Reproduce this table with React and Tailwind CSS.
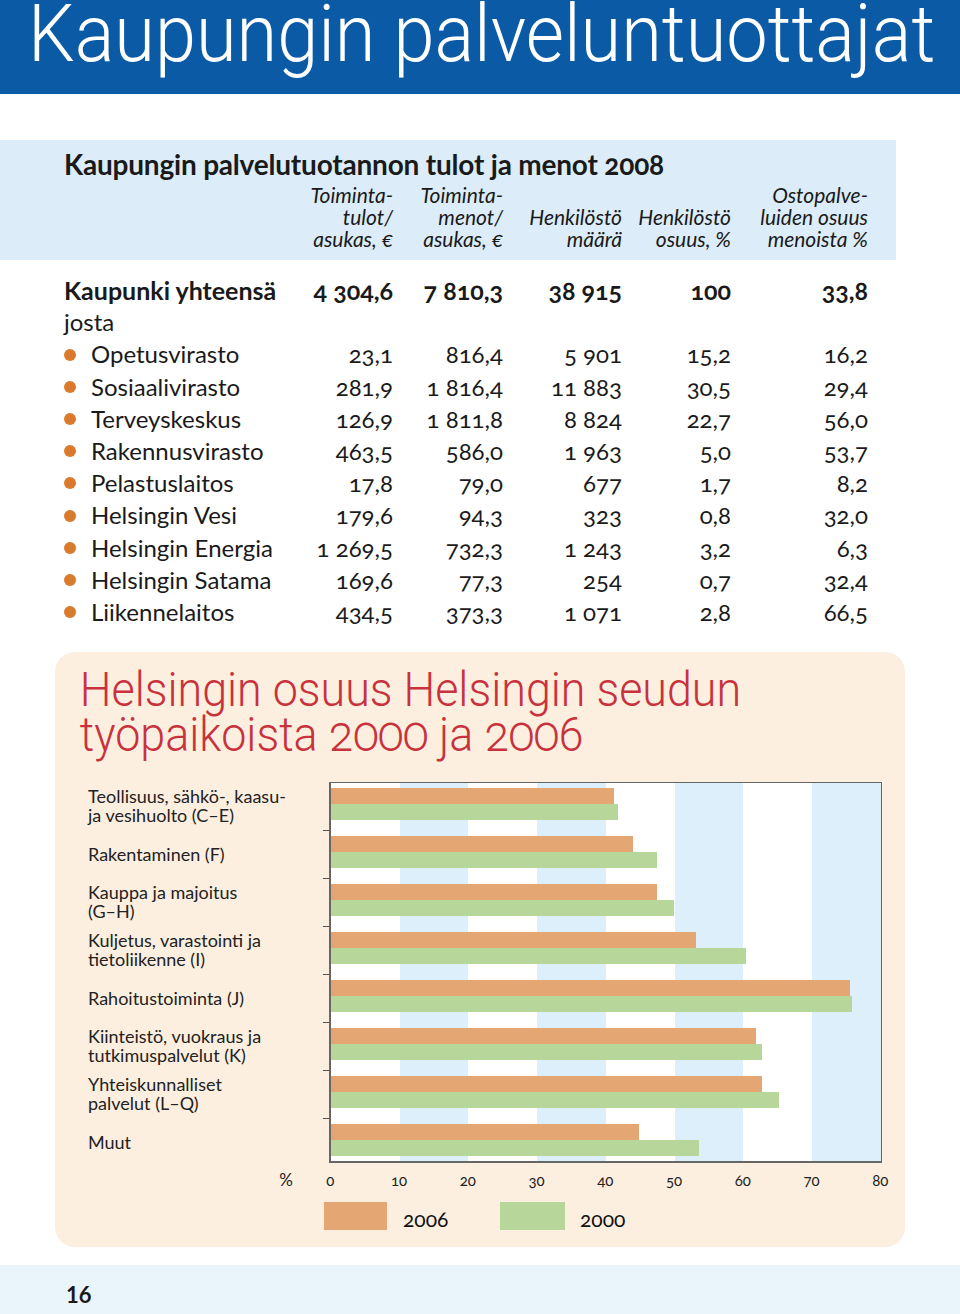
import React from "react";

const rows = [
  ["Opetusvirasto", "23,1", "816,4", "5 901", "15,2", "16,2"],
  ["Sosiaalivirasto", "281,9", "1 816,4", "11 883", "30,5", "29,4"],
  ["Terveyskeskus", "126,9", "1 811,8", "8 824", "22,7", "56,0"],
  ["Rakennusvirasto", "463,5", "586,0", "1 963", "5,0", "53,7"],
  ["Pelastuslaitos", "17,8", "79,0", "677", "1,7", "8,2"],
  ["Helsingin Vesi", "179,6", "94,3", "323", "0,8", "32,0"],
  ["Helsingin Energia", "1 269,5", "732,3", "1 243", "3,2", "6,3"],
  ["Helsingin Satama", "169,6", "77,3", "254", "0,7", "32,4"],
  ["Liikennelaitos", "434,5", "373,3", "1 071", "2,8", "66,5"],
];

// [label lines, 2006, 2000]
const groups = [
  [["Teollisuus, sähkö-, kaasu-", "ja vesihuolto (C–E)"], 41.2, 41.7],
  [["Rakentaminen (F)"], 43.9, 47.4],
  [["Kauppa ja majoitus", "(G–H)"], 47.4, 49.9],
  [["Kuljetus, varastointi ja", "tietoliikenne (I)"], 53.1, 60.4],
  [["Rahoitustoiminta (J)"], 75.5, 75.8],
  [["Kiinteistö, vuokraus ja", "tutkimuspalvelut (K)"], 61.8, 62.7],
  [["Yhteiskunnalliset", "palvelut (L–Q)"], 62.7, 65.2],
  [["Muut"], 44.8, 53.5],
];

const ticks = ["0", "10", "20", "30", "40", "50", "60", "70", "80"];

const PX_PER_UNIT = 550 / 80;

const App = () => {
  return (
    <div className="w-[960px] h-[1314px] bg-white font-['Lato','Open_Sans',sans-serif] oldstyle-nums text-[#1a1a1a] overflow-hidden">
      {/* top banner */}
      <div className="h-[94px] bg-[#0b5aa6] pl-[28px] overflow-hidden">
        <h1 className="font-['Roboto','Liberation_Sans',sans-serif] font-light text-[80px] leading-[68px] text-white scale-x-[0.924] origin-left whitespace-nowrap">
          Kaupungin palveluntuottajat
        </h1>
      </div>

      {/* table header band */}
      <div className="mt-[46px] w-[896px] h-[120px] bg-[#dcedf9] pl-[64px] pt-[8px]">
        <h2 className="text-[28px] leading-[32px] font-bold tracking-[-0.2px]">
          Kaupungin palvelutuotannon tulot ja menot 2008
        </h2>
        <div className="grid grid-cols-[240px_89px_110px_119px_109px_137px] mt-[4px] text-[21px] leading-[22px] italic text-right">
          <div />
          <div className="whitespace-nowrap">Toiminta-<br />tulot/<br />asukas, €</div>
          <div className="whitespace-nowrap">Toiminta-<br />menot/<br />asukas, €</div>
          <div className="whitespace-nowrap"><br />Henkilöstö<br />määrä</div>
          <div className="whitespace-nowrap"><br />Henkilöstö<br />osuus, %</div>
          <div className="whitespace-nowrap">Ostopalve-<br />luiden osuus<br />menoista %</div>
        </div>
      </div>

      {/* table body */}
      <div className="pl-[64px] mt-[14px] text-[24px] leading-[32.2px]">
        <div className="grid grid-cols-[240px_89px_110px_119px_109px_137px] font-bold text-[25px]">
          <div className="whitespace-nowrap">Kaupunki yhteensä</div>
          <div className="text-right whitespace-nowrap">4 304,6</div>
          <div className="text-right whitespace-nowrap">7 810,3</div>
          <div className="text-right">38 915</div>
          <div className="text-right">100</div>
          <div className="text-right">33,8</div>
        </div>
        <div>josta</div>
        {rows.map((r) => (
          <div key={r[0]} className="grid grid-cols-[240px_89px_110px_119px_109px_137px]">
            <div className="flex items-center whitespace-nowrap">
              <span className="w-[12px] h-[12px] shrink-0 rounded-full bg-[#d97a2c] mr-[15px]" />
              {r[0]}
            </div>
            {r.slice(1).map((v, i) => (
              <div key={i} className="text-right whitespace-nowrap">{v}</div>
            ))}
          </div>
        ))}
      </div>

      {/* chart panel */}
      <div className="mt-[24px] ml-[55px] w-[850px] h-[595px] rounded-[20px] bg-[#fcefe0] pt-[15px]">
        <h3 className="pl-[27px] font-['Roboto','Liberation_Sans',sans-serif] font-light text-[49px] leading-[45px] text-[#c8323d] scale-x-[0.915] origin-left whitespace-nowrap">
          Helsingin osuus Helsingin seudun
          <br />
          työpaikoista 2000 ja 2006
        </h3>

        <div className="pl-[33px] mt-[25px]">
          <div className="flex">
            <div className="w-[241px] shrink-0 text-[18px] leading-[19px] text-[#222]">
              {groups.map((g, i) => (
                <div key={i} className="h-[48px] flex flex-col justify-center">
                  {g[0].map((l) => (
                    <div key={l} className="whitespace-nowrap">{l}</div>
                  ))}
                </div>
              ))}
            </div>
            <div className="w-[553px] h-[381px] shrink-0 border-l-2 border-b-2 border-t border-r border-[#666] bg-[repeating-linear-gradient(90deg,#ffffff_0px,#ffffff_68.75px,#ddeffa_68.75px,#ddeffa_137.5px)]">
              {groups.map((g, i) => (
                <div key={i} className="relative h-[48px] pt-[5px] last:h-[45px]">
                  <div className="h-[16px] bg-[#e4a774]" style={{ width: g[1] * PX_PER_UNIT }} />
                  <div className="h-[16px] bg-[#b6d69a]" style={{ width: g[2] * PX_PER_UNIT }} />
                  {i < groups.length - 1 && (
                    <span className="absolute left-[-8px] bottom-0 w-[6px] h-px bg-[#555]" />
                  )}
                </div>
              ))}
            </div>
          </div>

          <div className="flex mt-[5px] text-[15px] leading-[18px] text-[#222]">
            <div className="w-[241px] shrink-0 pr-[36px] text-right text-[17px]">%</div>
            <div className="flex shrink-0 -ml-[33px]">
              {ticks.map((t) => (
                <div key={t} className="w-[68.75px] shrink-0 text-center">{t}</div>
              ))}
            </div>
          </div>

          <div className="flex items-center mt-[9px] ml-[236px] text-[21px] text-[#111]">
            <span className="w-[63px] h-[28px] shrink-0 bg-[#e4a774]" />
            <span className="ml-[16px] w-[97px] pt-[5px]">2006</span>
            <span className="w-[65px] h-[28px] shrink-0 bg-[#b6d69a]" />
            <span className="ml-[15px] pt-[5px]">2000</span>
          </div>
        </div>
      </div>

      {/* page footer */}
      <div className="mt-[18px] h-[49px] bg-[#eaf4fb] pl-[66px] pt-[17px]">
        <span className="text-[22px] leading-[26px] font-bold lining-nums">16</span>
      </div>
    </div>
  );
};

export default App;
